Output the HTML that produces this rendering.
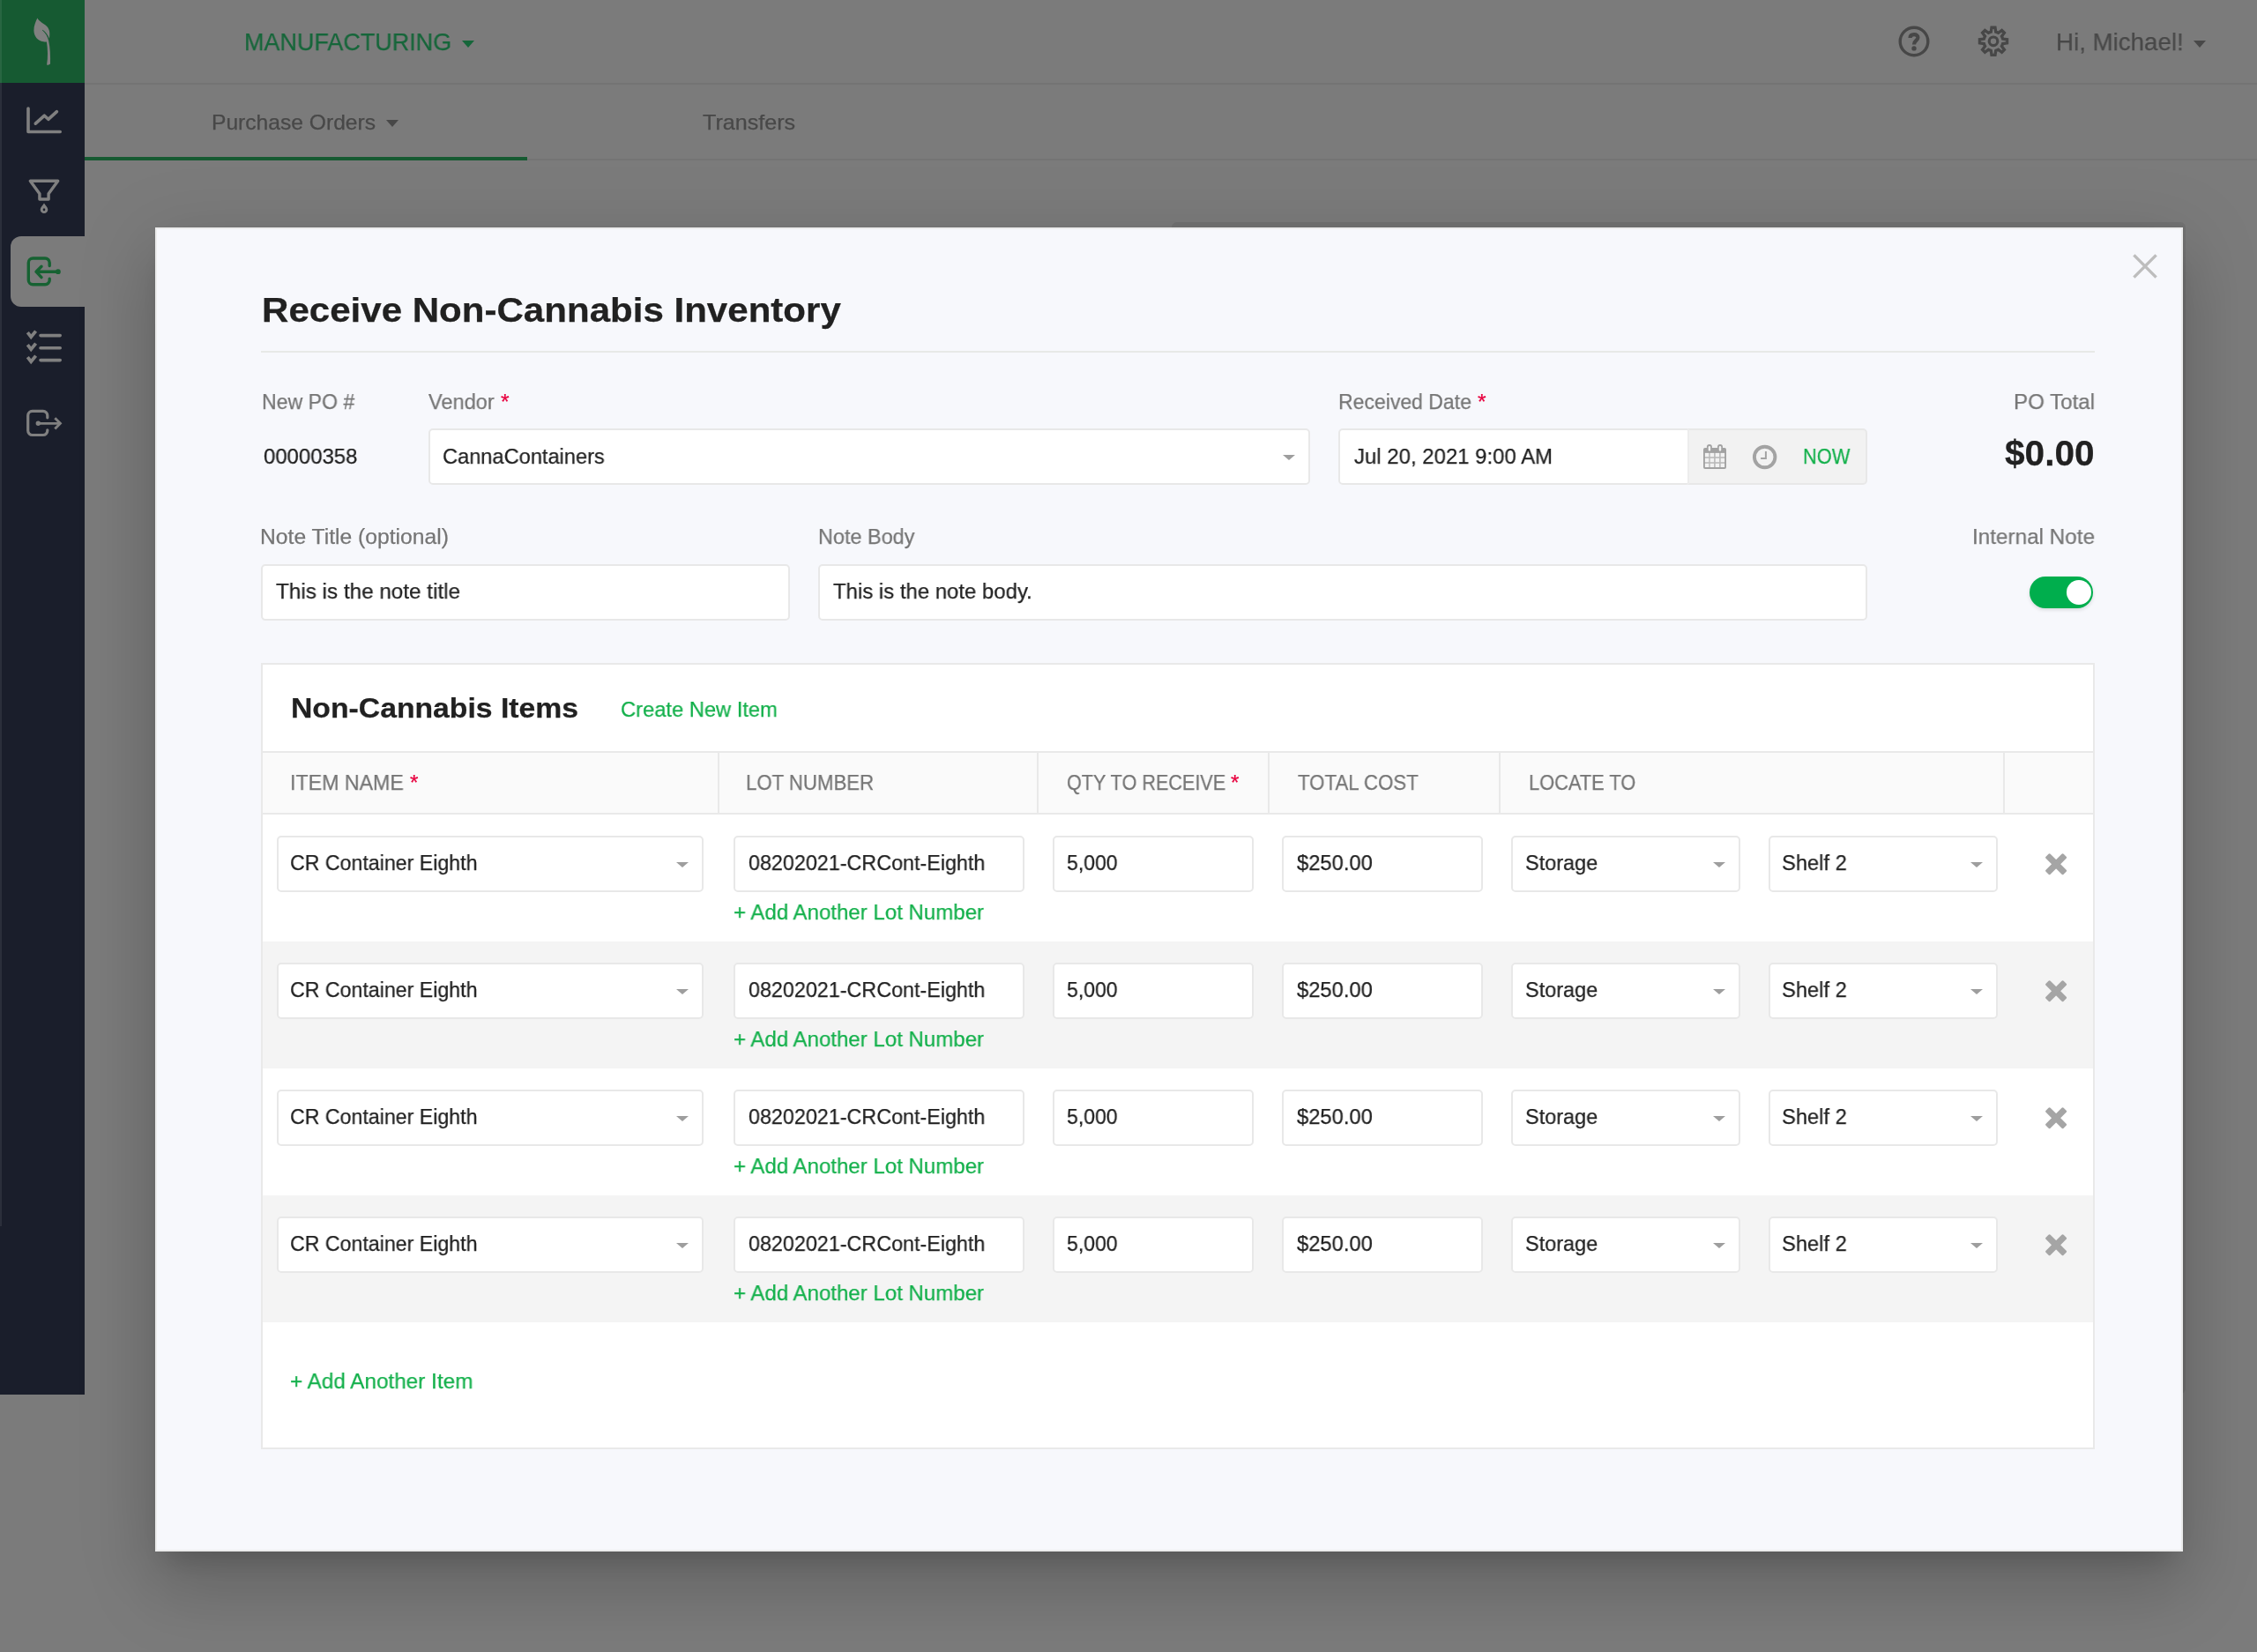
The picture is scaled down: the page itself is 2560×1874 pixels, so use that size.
<!DOCTYPE html>
<html lang="en">
<head>
<meta charset="utf-8">
<title>Receive Non-Cannabis Inventory</title>
<style>
*{box-sizing:border-box;margin:0;padding:0}
html,body{width:2560px;height:1874px;overflow:hidden}
body{position:relative;background:#7b7b7b;font-family:"Liberation Sans",sans-serif;color:#212121}
.abs{position:absolute}
svg{position:absolute;overflow:visible}
.t{position:absolute;white-space:nowrap;line-height:1;transform-origin:0 0;will-change:transform;-webkit-text-stroke:.25px}
#hdr{left:96px;top:0;width:2464px;height:96px;background:#7b7b7b;border-bottom:2px solid #747474}
#tabs{left:96px;top:96px;width:2464px;height:86px;background:#7b7b7b;border-bottom:2px solid #747474}
#tabline{left:96px;top:178px;width:502px;height:4px;background:#165a32}
#side{left:0;top:0;width:96px;height:1582px;background:#1a1e2b}
#sidestrip{left:0;top:0;width:2px;height:1391px;background:rgba(255,255,255,.08)}
#logo{left:0;top:0;width:96px;height:94px;background:#165a32}
#active{left:12px;top:268px;width:84px;height:80px;background:#7b7b7b;border-radius:12px 0 0 12px}
.caret{position:absolute;width:0;height:0;border-left:7.6px solid transparent;border-right:7.6px solid transparent;border-top:8px solid #484848}
#bgcard{left:1329px;top:252px;width:1150px;height:1329px;background:#727272;border-radius:6px}
#modal{left:176px;top:258px;width:2300px;height:1502px;background:#f7f8fc;border:2px solid #ececec;box-shadow:0 22px 30px -14px rgba(0,0,0,.17),0 48px 76px 6px rgba(0,0,0,.10),0 18px 80px 12px rgba(0,0,0,.10)}
.inp{position:absolute;background:#fff;border:2px solid #e8e8e8;border-radius:5px;height:64px}
.sc{position:absolute;width:0;height:0;border-left:7px solid transparent;border-right:7px solid transparent;border-top:6.4px solid #9e9e9e}
#panel{left:296px;top:752px;width:2080px;height:892px;background:#fff;border:2px solid #e9e9e9}
#thead{left:298px;top:852px;width:2076px;height:72px;background:#fafafa;border-top:2px solid #e9e9e9;border-bottom:2px solid #e9e9e9}
.vd{position:absolute;top:854px;width:2px;height:68px;background:#e9e9e9}
.row{position:absolute;left:298px;width:2076px;height:144px}
#addon{left:1914px;top:486px;width:204px;height:64px;background:#f2f2f2;border:2px solid #e8e8e8;border-left-color:#ececec;border-radius:0 5px 5px 0}
#toggle{left:2302px;top:654px;width:72px;height:36px;border-radius:18px;background:#00ae4d;box-shadow:0 2px 4px rgba(0,0,0,.12)}
#knob{left:2344px;top:658px;width:28px;height:28px;border-radius:14px;background:#fff}
</style>
</head>
<body>
<header>
<div class="abs" id="hdr"></div>
<div class="abs" id="tabs"></div>
<div class="abs" id="tabline"></div>
</header>
<aside>
<div class="abs" id="side"></div>
<div class="abs" id="logo"></div>
<div class="abs" id="active"></div>
<div class="abs" id="sidestrip"></div>

<!-- logo leaf -->
<svg style="left:0;top:0" width="96" height="94" viewBox="0 0 96 94"><path d="M42.4 20.5 C44.5 24.5 49.5 26.5 53 29.8 C56.2 33 57 37.5 55.9 43.8 C54.6 40 51.8 36.3 48.3 33.8 L47.9 34.3 C51.5 37.5 54 41.5 55.1 46 C56.9 54 57.3 64 57 72.6 Q55.2 74.2 53.1 73.4 C54.5 65 54.2 55.5 52.9 47.4 C51.5 47.6 50.5 47.4 49.3 47.2 C42.5 46.2 38.4 40.8 38.4 34.4 C38.4 29 40.5 24.5 42.4 20.5 Z" fill="#808080"/></svg>

<!-- sidebar icons -->
<svg style="left:0;top:100px" width="96" height="60" viewBox="0 100 96 60" fill="none" stroke="#808080" stroke-width="3.6" stroke-linecap="round" stroke-linejoin="round"><path d="M32 123 V149.5 H68.2"/><path d="M40.3 140.2 L50.4 131.2 L54.8 135.3 L64.4 126.6"/></svg>
<svg style="left:0;top:190px" width="96" height="60" viewBox="0 190 96 60" fill="none" stroke="#808080" stroke-width="3.4" stroke-linejoin="round"><path d="M34.3 205.3 H65.7 L55.1 219.8 V226 H44.9 V219.8 Z"/><path d="M50 230.4 C51.8 233 54.3 235.4 54.3 237.7 A4.3 4.3 0 0 1 45.7 237.7 C45.7 235.4 48.2 233 50 230.4 Z M50 236.3 A1.3 1.5 0 0 0 50 239.3 A1.3 1.5 0 0 0 50 236.3 Z" fill="#808080" fill-rule="evenodd" stroke="none"/></svg>
<svg style="left:0;top:280px" width="96" height="60" viewBox="0 280 96 60" fill="none" stroke="#166232" stroke-width="3.4" stroke-linecap="round" stroke-linejoin="round"><path d="M56.2 301.5 V298 A5 5 0 0 0 51.2 293 H37.3 A5 5 0 0 0 32.3 298 V317.7 A5 5 0 0 0 37.3 322.7 H51.2 A5 5 0 0 0 56.2 317.7 V316.2"/><path d="M65.9 308.2 H41 M47 302.2 L41 308.2 L47 314.6"/><circle cx="65.9" cy="308.2" r="1.2" fill="#166232"/></svg>
<svg style="left:0;top:366px" width="96" height="60" viewBox="0 366 96 60" fill="none" stroke="#808080" stroke-width="3.6"><path d="M46 380.6 H68.2 M46 394.7 H68.2 M46 408.6 H68.2" stroke-linecap="round"/><path d="M31.3 377.2 L35.2 382.2 L40.6 375.6 M31.3 391.2 L35.2 396.2 L40.6 389.6 M31.3 405.2 L35.2 410.2 L40.6 403.6" stroke-width="3.8"/></svg>
<svg style="left:0;top:452px" width="96" height="60" viewBox="0 452 96 60" fill="none" stroke="#808080" stroke-width="3.2" stroke-linecap="round" stroke-linejoin="round"><path d="M53.8 473.8 V471.4 A5 5 0 0 0 48.8 466.4 H36.7 A5 5 0 0 0 31.7 471.4 V488.5 A5 5 0 0 0 36.7 493.5 H48.8 A5 5 0 0 0 53.8 488.5 V487.8"/><path d="M43.3 480.3 H67.6" stroke-width="2.8"/><path d="M62.3 474.2 L68.4 480.3 L62.3 486.6" stroke-linecap="butt" stroke-linejoin="miter" stroke-width="2.9"/><circle cx="43.3" cy="480.3" r="1.1" fill="#808080"/></svg>

</aside>
<nav>
<!-- header carets / icons -->
<div class="caret" style="left:524px;top:46px;border-top-color:#16663a"></div>
<div class="caret" style="left:438px;top:136px;border-top-color:#484848"></div>
<div class="caret" style="left:2488px;top:46px"></div>
<svg style="left:2150px;top:26px" width="42" height="42" viewBox="-21 -21 42 42" fill="none" stroke="#474747"><circle cx="0" cy="0" r="15.8" stroke-width="3.4"/><path d="M-4.5 -4 C-4.5 -6.6 -2.6 -7.9 0.1 -7.9 C2.7 -7.9 4.4 -6.5 4.4 -4.4 C4.4 -1.1 0 -0.9 0 3.4" stroke-width="4.2"/><circle cx="0" cy="7.9" r="2.7" fill="#474747" stroke="none"/></svg>
<svg style="left:2240px;top:26px" width="42" height="42" viewBox="-21 -20.8 42 42" fill="none" stroke="#474747" stroke-width="3.3" stroke-linejoin="miter"><path d="M-2.70 -10.66 L-2.00 -15.57 L2.00 -15.57 L2.70 -10.66 A11.0 11.0 0 0 1 5.63 -9.45 L9.60 -12.43 L12.43 -9.60 L9.45 -5.63 A11.0 11.0 0 0 1 10.66 -2.70 L15.57 -2.00 L15.57 2.00 L10.66 2.70 A11.0 11.0 0 0 1 9.45 5.63 L12.43 9.60 L9.60 12.43 L5.63 9.45 A11.0 11.0 0 0 1 2.70 10.66 L2.00 15.57 L-2.00 15.57 L-2.70 10.66 A11.0 11.0 0 0 1 -5.63 9.45 L-9.60 12.43 L-12.43 9.60 L-9.45 5.63 A11.0 11.0 0 0 1 -10.66 2.70 L-15.57 2.00 L-15.57 -2.00 L-10.66 -2.70 A11.0 11.0 0 0 1 -9.45 -5.63 L-12.43 -9.60 L-9.60 -12.43 L-5.63 -9.45 A11.0 11.0 0 0 1 -2.70 -10.66 Z"/><circle cx="0" cy="0" r="4.8" stroke-width="3.2"/></svg>

<div class="t" style="left:276.5px;top:33.9px;font-size:28px;color:#16663a;transform:scaleX(0.9625)">MANUFACTURING</div>
<div class="t" style="left:240.1px;top:127.3px;font-size:24px;color:#484848;transform:scaleX(1.0257)">Purchase Orders</div>
<div class="t" style="left:796.5px;top:127.3px;font-size:24px;color:#484848;transform:scaleX(1.0464)">Transfers</div>
<div class="t" style="left:2331.8px;top:34.2px;font-size:28px;color:#484848;transform:scaleX(0.9893)">Hi, Michael!</div>
</nav>
<main>
<div class="abs" id="bgcard"></div>
</main>
<section role="dialog" aria-label="Receive Non-Cannabis Inventory">
<div class="abs" id="modal"></div>
<!-- close -->
<svg style="left:2419px;top:288px" width="28" height="28" viewBox="0 0 28 28" stroke="#bdbdbd" stroke-width="3.4" fill="none"><path d="M1.4 1.4 L26.6 26.6 M26.6 1.4 L1.4 26.6"/></svg>
<div class="abs" style="left:296px;top:398px;width:2080px;height:2px;background:#e7e9e7"></div>

<!-- form inputs -->
<div class="inp" style="left:486px;top:486px;width:1000px"></div><div class="sc" style="left:1455px;top:516px"></div>
<div class="inp" style="left:1518px;top:486px;width:400px"></div>
<div class="abs" id="addon"></div>
<div class="inp" style="left:296px;top:640px;width:600px"></div>
<div class="inp" style="left:928px;top:640px;width:1190px"></div>
<div class="abs" id="toggle"></div><div class="abs" id="knob"></div>
<!-- calendar -->
<svg style="left:1932px;top:504px" width="26" height="28" viewBox="0 0 26 28"><path d="M2 4 H24 A2 2 0 0 1 26 6 V26 A2 2 0 0 1 24 28 H2 A2 2 0 0 1 0 26 V6 A2 2 0 0 1 2 4 Z" fill="#a2a2a2"/><rect x="1.9" y="9.9" width="22.2" height="16.1" fill="#b9b9b9"/><g fill="#f2f2f2"><rect x="1.9" y="9.9" width="4.4" height="4.3"/><rect x="7.7" y="9.9" width="4.4" height="4.3"/><rect x="13.7" y="9.9" width="4.4" height="4.3"/><rect x="19.7" y="9.9" width="4.4" height="4.3"/><rect x="1.9" y="15.8" width="4.4" height="4.4"/><rect x="7.7" y="15.8" width="4.4" height="4.4"/><rect x="13.7" y="15.8" width="4.4" height="4.4"/><rect x="19.7" y="15.8" width="4.4" height="4.4"/><rect x="1.9" y="21.8" width="4.4" height="4.2"/><rect x="7.7" y="21.8" width="4.4" height="4.2"/><rect x="13.7" y="21.8" width="4.4" height="4.2"/><rect x="19.7" y="21.8" width="4.4" height="4.2"/></g><rect x="3.9" y="0" width="6" height="8.6" rx="3" fill="#a2a2a2"/><rect x="16" y="0" width="6" height="8.6" rx="3" fill="#a2a2a2"/><rect x="5.7" y="2" width="2.4" height="5.6" rx="1.2" fill="#f2f2f2"/><rect x="17.8" y="2" width="2.4" height="5.6" rx="1.2" fill="#f2f2f2"/></svg>
<!-- clock -->
<svg style="left:1987px;top:504px" width="30" height="30" viewBox="0 0 30 30" fill="none" stroke="#a3a3a3"><circle cx="14.65" cy="14.5" r="11.75" stroke-width="3.9"/><path d="M15.9 7.9 V15.9 H10.1" stroke-width="2"/></svg>

<!-- panel -->
<div class="abs" id="panel"></div>
<div class="abs" id="thead"></div>
<div class="vd" style="left:814px"></div><div class="vd" style="left:1176px"></div><div class="vd" style="left:1438px"></div><div class="vd" style="left:1700px"></div><div class="vd" style="left:2272px"></div>
<div class="row" style="top:924px;background:#fff"></div>
<div class="inp" style="left:314px;top:948px;width:484.0px"></div><div class="sc" style="left:767.0px;top:978.0px"></div><div class="inp" style="left:832px;top:948px;width:330.0px"></div><div class="inp" style="left:1194px;top:948px;width:228.0px"></div><div class="inp" style="left:1454px;top:948px;width:228.0px"></div><div class="inp" style="left:1714px;top:948px;width:260.0px"></div><div class="sc" style="left:1943.0px;top:978.0px"></div><div class="inp" style="left:2006px;top:948px;width:260.0px"></div><div class="sc" style="left:2235.0px;top:978.0px"></div>
<svg style="left:2318px;top:966px" width="28" height="28" viewBox="-14 -14 28 28"><g transform="translate(0.1,0.3) rotate(45)" fill="#a5a5a5"><rect x="-14.2" y="-3.6" width="28.4" height="7.2" rx="1.5"/><rect x="-3.6" y="-14.2" width="7.2" height="28.4" rx="1.5"/></g></svg>
<div class="row" style="top:1068px;background:#f4f4f4"></div>
<div class="inp" style="left:314px;top:1092px;width:484.0px"></div><div class="sc" style="left:767.0px;top:1122.0px"></div><div class="inp" style="left:832px;top:1092px;width:330.0px"></div><div class="inp" style="left:1194px;top:1092px;width:228.0px"></div><div class="inp" style="left:1454px;top:1092px;width:228.0px"></div><div class="inp" style="left:1714px;top:1092px;width:260.0px"></div><div class="sc" style="left:1943.0px;top:1122.0px"></div><div class="inp" style="left:2006px;top:1092px;width:260.0px"></div><div class="sc" style="left:2235.0px;top:1122.0px"></div>
<svg style="left:2318px;top:1110px" width="28" height="28" viewBox="-14 -14 28 28"><g transform="translate(0.1,0.3) rotate(45)" fill="#a5a5a5"><rect x="-14.2" y="-3.6" width="28.4" height="7.2" rx="1.5"/><rect x="-3.6" y="-14.2" width="7.2" height="28.4" rx="1.5"/></g></svg>
<div class="row" style="top:1212px;background:#fff"></div>
<div class="inp" style="left:314px;top:1236px;width:484.0px"></div><div class="sc" style="left:767.0px;top:1266.0px"></div><div class="inp" style="left:832px;top:1236px;width:330.0px"></div><div class="inp" style="left:1194px;top:1236px;width:228.0px"></div><div class="inp" style="left:1454px;top:1236px;width:228.0px"></div><div class="inp" style="left:1714px;top:1236px;width:260.0px"></div><div class="sc" style="left:1943.0px;top:1266.0px"></div><div class="inp" style="left:2006px;top:1236px;width:260.0px"></div><div class="sc" style="left:2235.0px;top:1266.0px"></div>
<svg style="left:2318px;top:1254px" width="28" height="28" viewBox="-14 -14 28 28"><g transform="translate(0.1,0.3) rotate(45)" fill="#a5a5a5"><rect x="-14.2" y="-3.6" width="28.4" height="7.2" rx="1.5"/><rect x="-3.6" y="-14.2" width="7.2" height="28.4" rx="1.5"/></g></svg>
<div class="row" style="top:1356px;background:#f4f4f4"></div>
<div class="inp" style="left:314px;top:1380px;width:484.0px"></div><div class="sc" style="left:767.0px;top:1410.0px"></div><div class="inp" style="left:832px;top:1380px;width:330.0px"></div><div class="inp" style="left:1194px;top:1380px;width:228.0px"></div><div class="inp" style="left:1454px;top:1380px;width:228.0px"></div><div class="inp" style="left:1714px;top:1380px;width:260.0px"></div><div class="sc" style="left:1943.0px;top:1410.0px"></div><div class="inp" style="left:2006px;top:1380px;width:260.0px"></div><div class="sc" style="left:2235.0px;top:1410.0px"></div>
<svg style="left:2318px;top:1398px" width="28" height="28" viewBox="-14 -14 28 28"><g transform="translate(0.1,0.3) rotate(45)" fill="#a5a5a5"><rect x="-14.2" y="-3.6" width="28.4" height="7.2" rx="1.5"/><rect x="-3.6" y="-14.2" width="7.2" height="28.4" rx="1.5"/></g></svg>

<div class="t" style="left:296.8px;top:331.6px;font-size:39.4px;color:#212121;transform:scaleX(1.0678);font-weight:bold">Receive Non-Cannabis Inventory</div>
<div class="t" style="left:297.1px;top:443.7px;font-size:24.6px;color:#757575;transform:scaleX(0.9386)">New PO #</div>
<div class="t" style="left:299.1px;top:505.5px;font-size:24.6px;color:#212121;transform:scaleX(0.9723)">00000358</div>
<div class="t" style="left:486.3px;top:443.7px;font-size:24.6px;color:#757575;transform:scaleX(0.9579)">Vendor</div>
<div class="t" style="left:568.1px;top:443.7px;font-size:24.6px;color:#e8003f">*</div>
<div class="t" style="left:501.6px;top:505.5px;font-size:24.6px;color:#212121;transform:scaleX(0.9602)">CannaContainers</div>
<div class="t" style="left:1517.7px;top:443.7px;font-size:24.6px;color:#757575;transform:scaleX(0.9355)">Received Date</div>
<div class="t" style="left:1676.0px;top:443.7px;font-size:24.6px;color:#e8003f">*</div>
<div class="t" style="left:1536.0px;top:505.5px;font-size:24.6px;color:#212121;transform:scaleX(0.9741)">Jul 20, 2021 9:00 AM</div>
<div class="t" style="left:2045.1px;top:505.5px;font-size:24.6px;color:#13b04b;transform:scaleX(0.8873)">NOW</div>
<div class="t" style="left:2284.0px;top:444.1px;font-size:24.6px;color:#757575;transform:scaleX(0.9796)">PO Total</div>
<div class="t" style="left:2273.9px;top:493.7px;font-size:40.5px;color:#212121;transform:scaleX(1.0027);font-weight:bold">$0.00</div>
<div class="t" style="left:295.0px;top:597.0px;font-size:24.6px;color:#757575;transform:scaleX(1.0030)">Note Title (optional)</div>
<div class="t" style="left:312.6px;top:658.7px;font-size:24.6px;color:#212121;transform:scaleX(0.9866)">This is the note title</div>
<div class="t" style="left:928.0px;top:597.0px;font-size:24.6px;color:#757575;transform:scaleX(0.9530)">Note Body</div>
<div class="t" style="left:944.8px;top:658.7px;font-size:24.6px;color:#212121;transform:scaleX(0.9734)">This is the note body.</div>
<div class="t" style="left:2237.0px;top:597.0px;font-size:24.6px;color:#757575;transform:scaleX(0.9874)">Internal Note</div>
<div class="t" style="left:330.0px;top:787.4px;font-size:32px;color:#212121;transform:scaleX(1.0539);font-weight:bold">Non-Cannabis Items</div>
<div class="t" style="left:703.8px;top:793.4px;font-size:24.6px;color:#13b04b;transform:scaleX(0.9639)">Create New Item</div>
<div class="t" style="left:328.7px;top:875.6px;font-size:24.2px;color:#757575;transform:scaleX(0.9587)">ITEM NAME</div>
<div class="t" style="left:464.8px;top:875.6px;font-size:24.2px;color:#e8003f">*</div>
<div class="t" style="left:846.1px;top:875.6px;font-size:24.2px;color:#757575;transform:scaleX(0.9173)">LOT NUMBER</div>
<div class="t" style="left:1209.5px;top:875.6px;font-size:24.2px;color:#757575;transform:scaleX(0.8936)">QTY TO RECEIVE</div>
<div class="t" style="left:1396.0px;top:875.6px;font-size:24.2px;color:#e8003f">*</div>
<div class="t" style="left:1472.1px;top:875.6px;font-size:24.2px;color:#757575;transform:scaleX(0.9196)">TOTAL COST</div>
<div class="t" style="left:1733.8px;top:875.6px;font-size:24.2px;color:#757575;transform:scaleX(0.9030)">LOCATE TO</div>
<div class="t" style="left:329.0px;top:967.2px;font-size:24.6px;color:#212121;transform:scaleX(0.9419)">CR Container Eighth</div>
<div class="t" style="left:849.0px;top:967.2px;font-size:24.6px;color:#212121;transform:scaleX(0.9482)">08202021-CRCont-Eighth</div>
<div class="t" style="left:1209.9px;top:967.2px;font-size:24.6px;color:#212121;transform:scaleX(0.9367)">5,000</div>
<div class="t" style="left:1471.0px;top:967.2px;font-size:24.6px;color:#212121;transform:scaleX(0.9658)">$250.00</div>
<div class="t" style="left:1729.5px;top:967.2px;font-size:24.6px;color:#212121;transform:scaleX(0.9544)">Storage</div>
<div class="t" style="left:2021.2px;top:967.2px;font-size:24.6px;color:#212121;transform:scaleX(0.9629)">Shelf 2</div>
<div class="t" style="left:832.1px;top:1022.5px;font-size:24.6px;color:#13b04b;transform:scaleX(0.9776)">+ Add Another Lot Number</div>
<div class="t" style="left:329.0px;top:1111.2px;font-size:24.6px;color:#212121;transform:scaleX(0.9419)">CR Container Eighth</div>
<div class="t" style="left:849.0px;top:1111.2px;font-size:24.6px;color:#212121;transform:scaleX(0.9482)">08202021-CRCont-Eighth</div>
<div class="t" style="left:1209.9px;top:1111.2px;font-size:24.6px;color:#212121;transform:scaleX(0.9367)">5,000</div>
<div class="t" style="left:1471.0px;top:1111.2px;font-size:24.6px;color:#212121;transform:scaleX(0.9658)">$250.00</div>
<div class="t" style="left:1729.5px;top:1111.2px;font-size:24.6px;color:#212121;transform:scaleX(0.9544)">Storage</div>
<div class="t" style="left:2021.2px;top:1111.2px;font-size:24.6px;color:#212121;transform:scaleX(0.9629)">Shelf 2</div>
<div class="t" style="left:832.1px;top:1166.5px;font-size:24.6px;color:#13b04b;transform:scaleX(0.9776)">+ Add Another Lot Number</div>
<div class="t" style="left:329.0px;top:1255.2px;font-size:24.6px;color:#212121;transform:scaleX(0.9419)">CR Container Eighth</div>
<div class="t" style="left:849.0px;top:1255.2px;font-size:24.6px;color:#212121;transform:scaleX(0.9482)">08202021-CRCont-Eighth</div>
<div class="t" style="left:1209.9px;top:1255.2px;font-size:24.6px;color:#212121;transform:scaleX(0.9367)">5,000</div>
<div class="t" style="left:1471.0px;top:1255.2px;font-size:24.6px;color:#212121;transform:scaleX(0.9658)">$250.00</div>
<div class="t" style="left:1729.5px;top:1255.2px;font-size:24.6px;color:#212121;transform:scaleX(0.9544)">Storage</div>
<div class="t" style="left:2021.2px;top:1255.2px;font-size:24.6px;color:#212121;transform:scaleX(0.9629)">Shelf 2</div>
<div class="t" style="left:832.1px;top:1310.5px;font-size:24.6px;color:#13b04b;transform:scaleX(0.9776)">+ Add Another Lot Number</div>
<div class="t" style="left:329.0px;top:1399.2px;font-size:24.6px;color:#212121;transform:scaleX(0.9419)">CR Container Eighth</div>
<div class="t" style="left:849.0px;top:1399.2px;font-size:24.6px;color:#212121;transform:scaleX(0.9482)">08202021-CRCont-Eighth</div>
<div class="t" style="left:1209.9px;top:1399.2px;font-size:24.6px;color:#212121;transform:scaleX(0.9367)">5,000</div>
<div class="t" style="left:1471.0px;top:1399.2px;font-size:24.6px;color:#212121;transform:scaleX(0.9658)">$250.00</div>
<div class="t" style="left:1729.5px;top:1399.2px;font-size:24.6px;color:#212121;transform:scaleX(0.9544)">Storage</div>
<div class="t" style="left:2021.2px;top:1399.2px;font-size:24.6px;color:#212121;transform:scaleX(0.9629)">Shelf 2</div>
<div class="t" style="left:832.1px;top:1454.5px;font-size:24.6px;color:#13b04b;transform:scaleX(0.9776)">+ Add Another Lot Number</div>
<div class="t" style="left:329.3px;top:1554.5px;font-size:24.6px;color:#13b04b;transform:scaleX(0.9878)">+ Add Another Item</div>
</section>
</body>
</html>
